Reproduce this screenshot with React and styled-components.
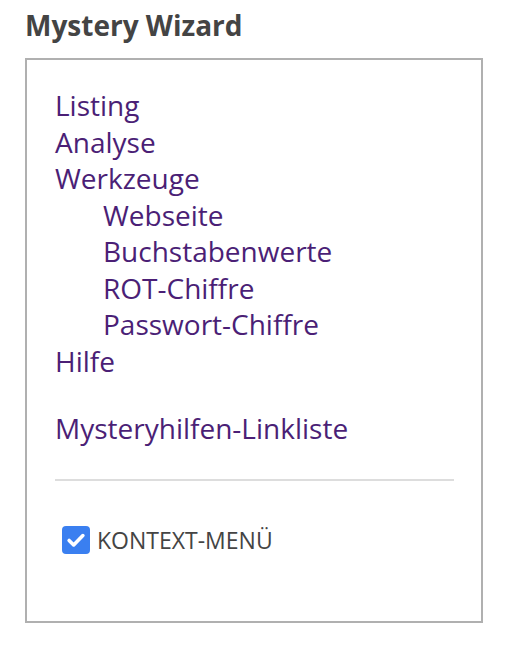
import React from 'react';
import styled, { createGlobalStyle } from 'styled-components';

const GlobalStyle = createGlobalStyle`
  body {
    margin: 0;
    background: #fff;
    font-family: "Open Sans", "Noto Sans", sans-serif;
  }
`;

const Page = styled.div`
  padding: 6px 25px 0 25px;
  width: 458px;
`;

const Title = styled.h2`
  margin: 0 0 14px 0;
  font-size: 28px;
  line-height: 38px;
  font-weight: 700;
  color: #444;
`;

const Panel = styled.div`
  border: 2px solid #b0b0b0;
  padding: 27px 27px 0 28px;
  height: 565px;
  box-sizing: border-box;
`;

const Menu = styled.ul`
  list-style: none;
  margin: 0;
  padding: 0;
`;

const Item = styled.li`
  font-size: 28px;
  line-height: 36.5px;
  padding-left: ${p => (p.sub ? '48px' : '0')};
  margin-top: ${p => (p.gap ? '31px' : '0')};
`;

const Link = styled.a`
  color: #4b1f76;
  text-decoration: none;
`;

const Divider = styled.hr`
  border: none;
  border-top: 2px solid #ddd;
  margin: 32px 0 0 0;
`;

const Option = styled.label`
  display: flex;
  align-items: center;
  gap: 7px;
  margin: 43px 0 0 7px;
  font-size: 23px;
  color: #444;
`;

const Box = styled.span`
  flex-shrink: 0;
  width: 28px;
  height: 28px;
  border-radius: 4px;
  background: #3a7ff0;
  display: flex;
  align-items: center;
  justify-content: center;
`;

const entries = [
  { label: 'Listing' },
  { label: 'Analyse' },
  { label: 'Werkzeuge' },
  { label: 'Webseite', sub: true },
  { label: 'Buchstabenwerte', sub: true },
  { label: 'ROT-Chiffre', sub: true },
  { label: 'Passwort-Chiffre', sub: true },
  { label: 'Hilfe' },
  { label: 'Mysteryhilfen-Linkliste', gap: true },
];

const App = () => {
  return (
    <Page>
      <GlobalStyle />
      <Title>Mystery Wizard</Title>
      <Panel>
        <Menu>
          {entries.map((e) => (
            <Item key={e.label} sub={e.sub} gap={e.gap}>
              <Link href="#">{e.label}</Link>
            </Item>
          ))}
        </Menu>
        <Divider />
        <Option>
          <Box>
            <svg width="22" height="22" viewBox="0 0 16 16">
              <path d="M3 8.3l3.3 3.3L13 4.8" fill="none" stroke="#fff" strokeWidth="2.6" strokeLinecap="round" strokeLinejoin="round" />
            </svg>
          </Box>
          KONTEXT-MENÜ
        </Option>
      </Panel>
    </Page>
  );
};

export default App;
